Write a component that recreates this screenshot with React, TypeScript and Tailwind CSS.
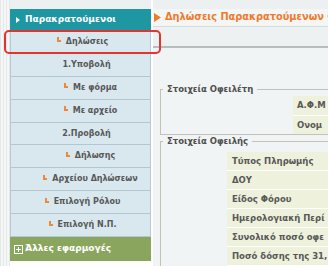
const MENU = [
  { label: "Δηλώσεις", arrow: true, pad: "pl-[4px]" },
  { label: "1.Υποβολή", arrow: false, pad: "pl-[12px]" },
  { label: "Με φόρμα", arrow: true, pad: "pl-[20px]" },
  { label: "Με αρχείο", arrow: true, pad: "pl-[20px]" },
  { label: "2.Προβολή", arrow: false, pad: "pl-[12px]" },
  { label: "Δήλωσης", arrow: true, pad: "pl-[20px]" },
  { label: "Αρχείου Δηλώσεων", arrow: true, pad: "pl-[20px]" },
  { label: "Επιλογή Ρόλου", arrow: true, pad: "pl-[4px]" },
  { label: "Επιλογή Ν.Π.", arrow: true, pad: "pl-[4px]" },
];

const DEBTOR = ["Α.Φ.Μ", "Ονομ"];
const DEBT = [
  "Τύπος Πληρωμής",
  "ΔΟΥ",
  "Είδος Φόρου",
  "Ημερολογιακή Περί",
  "Συνολικό ποσό οφε",
  "Ποσό δόσης της 31,",
];

function SubArrow() {
  return <span className="mb-[4px] h-[5px] w-[4px] shrink-0 border-b-2 border-l-2 border-[#f0883a]" />;
}

export default function App() {
  return (
    <div
      className="relative flex h-[266px] w-[328px] overflow-hidden bg-[#edf0f0] font-bold text-[#585858]"
      style={{ fontFamily: '"DejaVu Sans", Verdana, sans-serif' }}
    >
      {/* striped page edge */}
      <div className="w-[10px] shrink-0 bg-[repeating-linear-gradient(90deg,#e3e8e8_0px,#e3e8e8_1px,#f5f7f7_1px,#f5f7f7_3px)]" />

      {/* side menu */}
      <div className="flex w-[141px] shrink-0 flex-col pt-[9px]">
        <div className="flex h-[22px] items-center gap-[5px] bg-[#1f97a2] pl-[6px] text-[9px] text-white">
          <svg width="4" height="6" viewBox="0 0 4 6">
            <path d="M0 0L4 3L0 6Z" fill="#fff" />
          </svg>
          Παρακρατούμενοι
        </div>
        <div className="flex h-[206px] flex-col border-r border-l border-[#b5cad4] bg-[#d9e8ef]">
          {MENU.map((m) => (
            <div
              key={m.label}
              className={`flex flex-1 items-center justify-center gap-[5px] border-b border-[#b3c7d1] text-[8px] ${m.pad}`}
            >
              {m.arrow && <SubArrow />}
              <span>{m.label}</span>
            </div>
          ))}
        </div>
        <div className="flex h-[24px] items-center gap-[2px] bg-[#89a55e] pl-[4px] text-[9px] text-white">
          <svg width="9" height="9" viewBox="0 0 9 9">
            <rect x="0.5" y="0.5" width="8" height="8" fill="none" stroke="#fff" />
            <path d="M2 4.5H7M4.5 2V7" stroke="#fff" />
          </svg>
          Άλλες εφαρμογές
        </div>
        <div className="flex-1 bg-white" />
      </div>

      <div className="w-[2px] shrink-0 bg-white" />

      {/* main */}
      <div className="flex min-w-0 flex-1 flex-col bg-[#f1f4f4]">
        <div className="h-[9px] bg-[#edf0f0]" />
        <div className="flex h-[19px] items-center gap-[4px] overflow-hidden border-b border-[#d6dbdb] bg-[#f4f6f6] pl-[1px] text-[9.8px] whitespace-nowrap text-[#ee7a2c]">
          <svg width="7" height="9" viewBox="0 0 7 9" className="shrink-0">
            <path d="M0 0L7 4.5L0 9Z" fill="#ee7a2c" />
          </svg>
          <span>Δηλώσεις Παρακρατούμενων Φ</span>
        </div>
        <div className="h-[21px] border-b-2 border-[#b7bcbc] bg-[#eef1f1]" />

        <fieldset className="mt-[36px] ml-[7px] w-[220px] border border-r-0 border-[#c4c2b8] p-0">
          <legend className="ml-[2px] px-[4px] text-[8.5px] leading-[10px] text-[#4f4f4f]">Στοιχεία Οφειλέτη</legend>
          <div className="pt-[2px] pl-[132px]">
            {DEBTOR.map((l, i) => (
              <div
                key={l}
                className={`flex items-center bg-[#eef1dc] pl-[4px] text-[8.5px] ${i === 0 ? "h-[20px] border-b border-white" : "h-[18px]"}`}
              >
                {l}
              </div>
            ))}
          </div>
        </fieldset>

        <fieldset className="mt-[1px] ml-[7px] w-[220px] border border-r-0 border-b-0 border-[#c4c2b8] p-0">
          <legend className="ml-[2px] px-[4px] text-[8.5px] leading-[10px] text-[#4f4f4f]">Στοιχεία Οφειλής</legend>
          <div className="pt-[6px] pl-[66px]">
            {DEBT.map((l) => (
              <div
                key={l}
                className="flex h-[19px] items-center border-b border-white bg-[#eef1dc] pl-[5px] text-[8.5px] whitespace-nowrap"
              >
                {l}
              </div>
            ))}
          </div>
        </fieldset>
      </div>

      {/* highlight around the current menu entry */}
      <div className="absolute top-[30px] left-[4px] h-[24px] w-[157px] rounded-[5px] border-2 border-[#e3342f]" />
    </div>
  );
}
